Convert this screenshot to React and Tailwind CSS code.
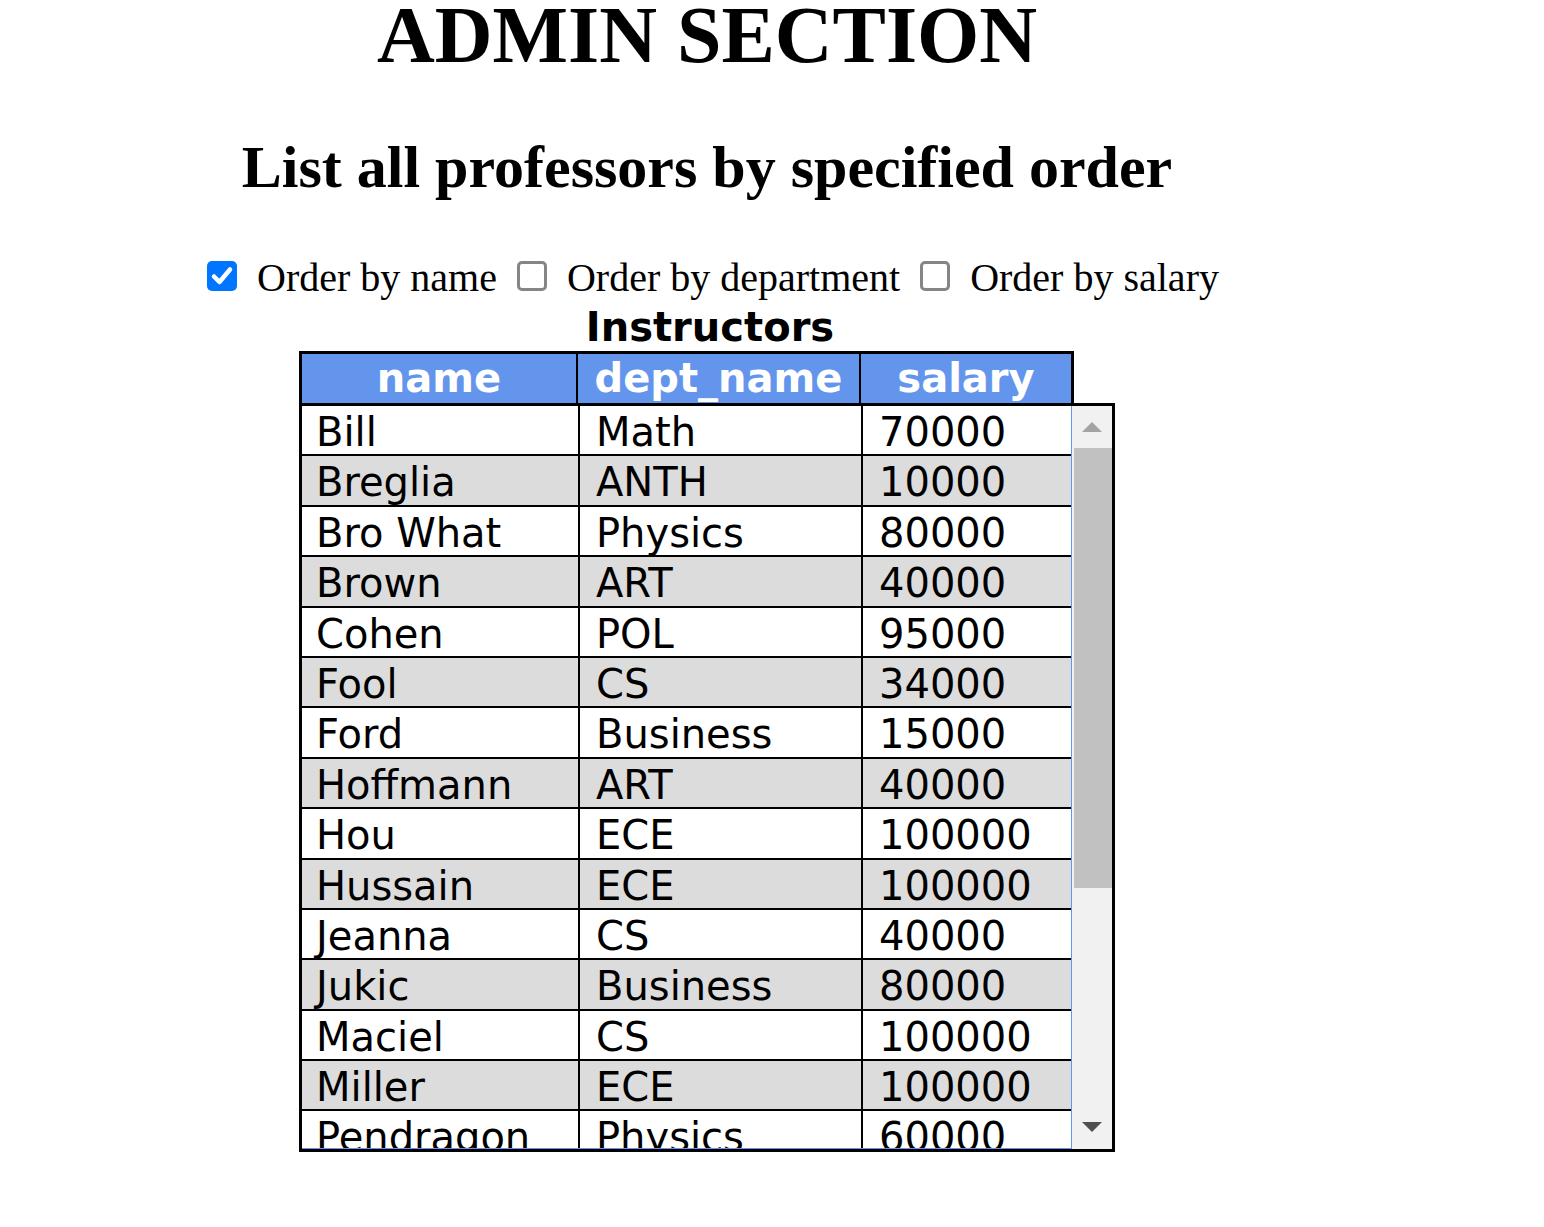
import React from 'react';

const instructors = [
    ['Bill', 'Math', '70000'],
    ['Breglia', 'ANTH', '10000'],
    ['Bro What', 'Physics', '80000'],
    ['Brown', 'ART', '40000'],
    ['Cohen', 'POL', '95000'],
    ['Fool', 'CS', '34000'],
    ['Ford', 'Business', '15000'],
    ['Hoffmann', 'ART', '40000'],
    ['Hou', 'ECE', '100000'],
    ['Hussain', 'ECE', '100000'],
    ['Jeanna', 'CS', '40000'],
    ['Jukic', 'Business', '80000'],
    ['Maciel', 'CS', '100000'],
    ['Miller', 'ECE', '100000'],
    ['Pendragon', 'Physics', '60000'],
];

const Box = ({ checked }) => (
    checked ? (
        <span className="w-[30px] h-[30px] rounded-[5px] bg-[#0075ff] flex items-center justify-center shrink-0">
            <svg width="26" height="26" viewBox="0 0 26 26">
                <path d="M5 13.5 L10.5 19 L21 6.5" fill="none" stroke="white" strokeWidth="4.5" strokeLinecap="round" strokeLinejoin="round" />
            </svg>
        </span>
    ) : (
        <span className="w-[30px] h-[30px] rounded-[5px] border-[3px] border-[#858585] bg-white shrink-0" />
    )
);

const Option = ({ checked, label }) => (
    <div className="flex items-center gap-[20px]">
        <Box checked={checked} />
        <span className="relative top-[2px]">{label}</span>
    </div>
);

export default function App() {
    return (
        <div className="w-[1414px] bg-white text-black flex flex-col items-center">
            {/* headings */}
            <h1 className="font-['Liberation_Serif',serif] font-bold text-[80px] leading-[80px] -mt-[5px]">ADMIN SECTION</h1>
            <h2 className="font-['Liberation_Serif',serif] font-bold text-[60px] leading-[60px] mt-[62px]">List all professors by specified order</h2>

            <div className="flex items-center gap-[20px] mt-[59px] ml-[12px] font-['Liberation_Serif',serif] text-[40px] leading-[40px]">
                <Option checked label="Order by name" />
                <Option label="Order by department" />
                <Option label="Order by salary" />
            </div>

            <div className="mt-[7px] w-[816px] flex flex-col font-['DejaVu_Sans',Verdana,sans-serif]">
                <div className="text-center font-bold text-[40px] leading-[48px] pl-[6px]">Instructors</div>

                {/* header row */}
                <div className="w-[775px] flex border-[3px] border-black bg-[#6495ed] text-white font-bold text-[40px] leading-[49px]">
                    <div className="w-[276px] text-center border-r-2 border-black">name</div>
                    <div className="w-[283px] text-center border-r-2 border-black">dept_name</div>
                    <div className="w-[210px] text-center">salary</div>
                </div>

                {/* scrolling body */}
                <div className="-mt-[3px] h-[749px] border-[3px] border-black flex">
                    <div className="w-[770px] overflow-hidden border-r border-b border-[#6495ed] text-[40px]">
                        {instructors.map(([name, dept, salary], i) => (
                            <div key={name} className={`flex border-b-2 border-black ${i % 2 ? 'bg-[#dcdcdc]' : 'bg-white'}`}>
                                <div className="w-[278px] h-[48.4px] leading-[52px] pl-[14px] border-r-2 border-black whitespace-nowrap">{name}</div>
                                <div className="w-[283px] h-[48.4px] leading-[52px] pl-[16px] border-r-2 border-black whitespace-nowrap">{dept}</div>
                                <div className="flex-1 h-[48.4px] leading-[52px] pl-[16px] whitespace-nowrap">{salary}</div>
                            </div>
                        ))}
                    </div>
                    <div className="w-[40px] bg-[#f1f1f1] flex flex-col">
                        <div className="h-[42px] flex items-center justify-center">
                            <span className="w-0 h-0 border-l-[10px] border-r-[10px] border-b-[10px] border-l-transparent border-r-transparent border-b-[#a3a3a3]" />
                        </div>
                        <div className="h-[440px] ml-[2px] bg-[#c1c1c1]" />
                        <div className="flex-1" />
                        <div className="h-[44px] flex items-center justify-center">
                            <span className="w-0 h-0 border-l-[10px] border-r-[10px] border-t-[10px] border-l-transparent border-r-transparent border-t-[#505050]" />
                        </div>
                    </div>
                </div>
            </div>
            <div className="h-[76px]" />
        </div>
    );
}
